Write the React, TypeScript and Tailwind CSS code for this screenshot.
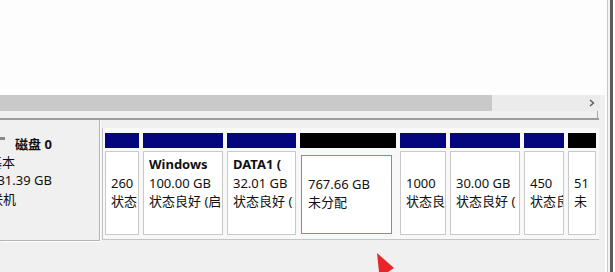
import React from 'react'

type Part = {
  w: number
  bar: 'blue' | 'black'
  lines: string[]
  bold?: boolean
  selected?: boolean
}

// disk 0 partitions, left to right
const PARTS: Part[] = [
  { w: 38, bar: 'blue', lines: ['', '260', '状态'] },
  { w: 84, bar: 'blue', lines: ['Windows', '100.00 GB', '状态良好 (启'], bold: true },
  { w: 73, bar: 'blue', lines: ['DATA1 (', '32.01 GB', '状态良好 ('], bold: true },
  { w: 100, bar: 'black', lines: ['', '767.66 GB', '未分配'], selected: true },
  { w: 50, bar: 'blue', lines: ['', '1000', '状态良'] },
  { w: 74, bar: 'blue', lines: ['', '30.00 GB', '状态良好 ('] },
  { w: 44, bar: 'blue', lines: ['', '450', '状态良'] },
  { w: 32, bar: 'black', lines: ['', '51', '未'] },
]

function Partition({ part }: { part: Part }) {
  return (
    <div className="flex flex-col shrink-0" style={{ width: part.w }}>
      <div className={`h-[15px] mx-[2px] ${part.bar === 'blue' ? 'bg-[#05057e]' : 'bg-black'}`} />
      <div className="flex-1 px-[2px] pt-[3px] pb-[4px] flex">
        <div
          className={`flex-1 bg-white overflow-hidden pl-[5px] ${
            part.selected ? 'border border-[#cf6f72] mt-[4px] mb-[1px] ml-[1px] mr-[4px] pl-[6px] pt-[0px]' : 'border border-[#c9c9c9] pt-[3px]'
          }`}
        >
          {part.lines.map((l, i) => (
            <div
              key={i}
              className={`h-[18.5px] leading-[18.5px] whitespace-nowrap overflow-hidden ${i === 0 && part.bold ? 'font-bold' : ''}`}
            >
              {l}
            </div>
          ))}
        </div>
      </div>
    </div>
  )
}

export default function App() {
  return (
    <div className="w-[615px] h-[272px] overflow-hidden relative flex bg-[#f0f0f0] text-[13px] text-[#111] font-['Noto_Sans','Noto_Sans_CJK_SC',sans-serif]">
      <div className="w-[605px] flex flex-col">
        {/* volume list area */}
        <div className="h-[95px] bg-[#fdfdfd]" />

        {/* horizontal scrollbar */}
        <div className="h-[16px] flex w-[600px] bg-[#ebebeb]">
          <div className="w-[492px] bg-[#c9c9c9]" />
          <div className="flex-1" />
          <div className="w-[16px] flex items-center justify-center">
            <svg width="6" height="8" viewBox="0 0 6 8">
              <path d="M1 1l3.5 3L1 7" fill="none" stroke="#5a5a5a" strokeWidth="1.4" />
            </svg>
          </div>
        </div>
        <div className="h-[7px] w-[598px] border-r border-[#a8a8a8]" />
        <div className="h-[2px] w-[599px] bg-[#9c9c9c]" />

        {/* disk row */}
        <div className="flex h-[122px]">
          <div className="w-[100px] h-[121px] relative border-r border-b border-[#b4b4b4] shadow-[1px_1px_0_#ffffff] pt-[15px]">
            <div className="absolute left-0 top-[17px] w-[5px] h-[3px] bg-[#8a8a8a]" />
            <div className="ml-[15px] font-bold leading-[18px]">磁盘 0</div>
            <div className="ml-[-11px] leading-[18px] whitespace-nowrap">基本</div>
            <div className="ml-[-10px] leading-[18.5px] whitespace-nowrap">931.39 GB</div>
            <div className="ml-[-10px] leading-[18.5px] whitespace-nowrap">联机</div>
          </div>

          <div className="ml-[2px] mt-[8px] h-[112px] w-[497px] flex pt-[5px] bg-[#f8f8f8] border-l border-b border-[#c4c4c4]">
            {PARTS.map((p, i) => (
              <Partition key={i} part={p} />
            ))}
          </div>
        </div>

        <div className="flex-1" />
      </div>

      {/* window frame on the right */}
      <div className="flex-1 flex bg-[#fdfdfd]">
        <div className="w-[2px]" />
        <div className="w-[1px] bg-[#c8c8c8]" />
        <div className="w-[2px] bg-[#f4f4f4]" />
        <div className="w-[3px] bg-[#5c5c5c]" />
      </div>

      {/* red annotation arrow */}
      <svg className="absolute left-[370px] top-[248px]" width="30" height="24" viewBox="0 0 30 24">
        <polygon points="7,5 24,20 18,24 9,24" fill="#e8262a" />
      </svg>
    </div>
  )
}
